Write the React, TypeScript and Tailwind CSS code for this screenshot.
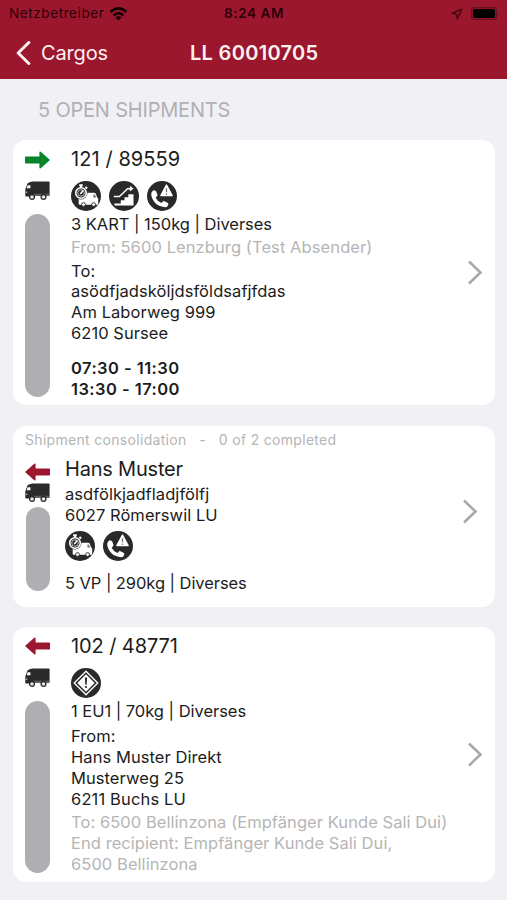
import type { ReactNode } from "react";

const ArrowIcon = ({ back = false }: { back?: boolean }) => (
  <svg
    width="25"
    height="18"
    viewBox="0 0 25 18"
    className={back ? "-scale-x-100 text-[#9b1730]" : "text-[#078629]"}
  >
    <path
      d="M.6 5.6h13.800V1.200q.2-1.300 1.300-.4L24.500 8.400q.5.600 0 1.200L15.700 17.200q-1.100.900-1.300-.4v-4.400H.6Q0 12.400 0 11.700V6.300q0-.7.6-.7z"
      fill="currentColor"
    />
  </svg>
);

const TruckIcon = () => (
  <svg width="25" height="19" viewBox="0 0 25 19">
    <path d="M8 .4h15.800q.8 0 .8.800v13.600H6.500V1.500z" fill="#2a2a2a" />
    <path d="M2.600 2.200Q5 .7 8 .4v15.200H1.100Q.3 15.600.3 14.800V8.600z" fill="#2a2a2a" />
    <path d="M2.700 4.200h2.700v3.100H1.700z" fill="#fff" />
    <path d="M9 13.300h15.500" stroke="#999" strokeWidth=".6" />
    <path d="M.8 11.200h1.600" stroke="#ddd" strokeWidth="1" />
    <circle cx="7" cy="15.900" r="2.400" fill="#e8e8e8" stroke="#2a2a2a" strokeWidth="1.300" />
    <circle cx="18.500" cy="15.900" r="2.400" fill="#e8e8e8" stroke="#2a2a2a" strokeWidth="1.300" />
  </svg>
);

const Badge = ({ children }: { children: ReactNode }) => (
  <svg width="30" height="30" viewBox="0 0 30 30">
    <circle cx="15" cy="15" r="15" fill="#292929" />
    {children}
  </svg>
);

const TimedDeliveryIcon = () => (
  <Badge>
    <path
      d="M13 11.800h10q1.300 0 1.900 1.300l1.300 3.400 1 1v5.300q0 .9-.9.900H8.700q-1 0-1-1v-6z"
      fill="#fff"
    />
    <path d="M22.400 13.400h.9q.6 0 .9.700l1 2.400h-2.800z" fill="#777" />
    <circle cx="12.500" cy="23.500" r="1.900" fill="#fff" stroke="#292929" strokeWidth=".9" />
    <circle cx="22.600" cy="23.500" r="1.900" fill="#fff" stroke="#292929" strokeWidth=".9" />
    <circle cx="10" cy="12" r="6.500" fill="#292929" />
    <circle cx="10" cy="12" r="5.300" fill="none" stroke="#fff" strokeWidth="1.600" />
    <circle cx="10" cy="12" r="3.300" fill="none" stroke="#c9c9c9" strokeWidth=".9" />
    <path d="M9.300 12.900l2.900-3.400" stroke="#fff" strokeWidth="1.600" />
    <path d="M8.200 4.300h3.600M10 4v2.800M14.400 5.900l1.700 1.500" stroke="#fff" strokeWidth="2" />
  </Badge>
);

const StairsIcon = () => (
  <Badge>
    <path d="M5.400 24.400v-1.900h6.400v-3.200H15.500v-3h3.800v-3.100h5.200v11.200z" fill="#fff" />
    <path d="M4.800 15.500h5.600l8.200-7.700H22" fill="none" stroke="#fff" strokeWidth="1.400" />
    <path d="M20.800 4.800l3.800 2.800-3.800 2.800z" fill="#fff" />
  </Badge>
);

const CallWarningIcon = () => (
  <Badge>
    <path
      d="M5.200 10.500q1-1.300 2.600-1.100 1 .2 1.400 1.100l1.200 3q.4 1.100-.6 1.900l-1.200 1q1.800 3.900 5.800 5.700l1.200-1.400q.8-.9 1.900-.4l3 1.400q1.100.6.8 1.800-.6 2.700-3.200 2.700Q10.600 25.800 7 20.600 3.900 16.100 4.300 12.500q.1-1.100.9-2z"
      fill="#fff"
    />
    <path
      d="M19.500 4l5.600 10.600H13.900z"
      fill="#fff"
      stroke="#fff"
      strokeWidth="1.400"
      strokeLinejoin="round"
    />
    <path d="M19.500 7.200v4.100M19.500 12.500v1.400" stroke="#777" strokeWidth="1.300" />
  </Badge>
);

const HazardIcon = () => (
  <Badge>
    <path d="M15 3.200L26.800 15 15 26.800 3.200 15z" fill="none" stroke="#fff" strokeWidth="1.300" />
    <path d="M15 6.300L23.700 15 15 23.700 6.300 15z" fill="#fff" />
    <path d="M13.900 9.500h2.200l-.4 7.200h-1.400z" fill="#292929" />
    <circle cx="15" cy="19" r="1.100" fill="#292929" />
  </Badge>
);

const Chevron = () => (
  <svg width="16" height="26" viewBox="0 0 16 26" fill="none" stroke="#a9a9ab" strokeWidth="2.600">
    <path d="M1 1.500L12.500 12.500 1 23.500" />
  </svg>
);

const StatusBar = () => (
  <div className="flex h-[27px] items-center text-[#2b0009]">
    <div className="flex w-[200px] items-center gap-[5px] pl-[9px]">
      <span className="text-[13.5px] tracking-[0.6px]">Netzbetreiber</span>
      <svg width="19" height="14" viewBox="0 0 18 14" fill="none" stroke="#170004" strokeWidth="2.600">
        <path d="M1 5Q9-2.200 17 5" />
        <path d="M4 8.400q5-4.400 10 0" />
        <path d="M6 10.500q3-2.500 6 0L9 13.600z" fill="#170004" stroke="none" />
      </svg>
    </div>
    <span className="w-[108px] text-center text-[13.5px] font-semibold tracking-[0.6px]">
      8:24 AM
    </span>
    <div className="flex flex-1 items-center justify-end gap-[8px] pr-[7px]">
      <svg width="12" height="12" viewBox="0 0 12 12" fill="none" stroke="#4a0814" strokeWidth="1.500">
        <path d="M10.800 1.200L1.300 5.300l4.200 1.100.8 4.300z" strokeLinejoin="round" />
      </svg>
      <svg width="29" height="13" viewBox="0 0 29 13">
        <rect x=".6" y=".6" width="24.800" height="11.800" rx="3" fill="none" stroke="#680e20" strokeWidth="1.200" />
        <rect x="2" y="2" width="22" height="9" rx="1.800" fill="#000" />
        <path d="M27 4.500q2 2 0 4z" fill="#680e20" />
      </svg>
    </div>
  </div>
);

const NavBar = () => (
  <div className="flex h-[52px] items-center pb-px text-[#fdf1f0]">
    <div className="flex w-[190px] items-center gap-[10px] pl-[16px]">
      <svg width="15" height="24" viewBox="0 0 15 24" fill="none" stroke="currentColor" strokeWidth="3">
        <path d="M12.800 1.500L2.200 12l10.600 10.500" strokeLinecap="round" strokeLinejoin="round" />
      </svg>
      <span className="text-[20px] tracking-[-0.15px]">Cargos</span>
    </div>
    <h1 className="text-[20px] font-semibold tracking-[0.3px] whitespace-nowrap">LL 60010705</h1>
  </div>
);

const Card = ({ className, children }: { className: string; children: ReactNode }) => (
  <section className={`ml-[13px] mr-[12px] rounded-[13px] bg-white ${className}`}>
    {children}
  </section>
);

const App = () => {
  return (
    <div className="h-[900px] w-[507px] overflow-hidden bg-[#f1f0f5] font-['Inter',sans-serif] text-[#1c1c1c]">
      <header className="h-[79px] bg-[#9b172e]">
        <StatusBar />
        <NavBar />
      </header>

      <p className="h-[61px] pt-[19px] pl-[38px] text-[20px] leading-[25px] tracking-[-0.2px] text-[#b0b0b4]">
        5 OPEN SHIPMENTS
      </p>

      <main className="text-[16.5px] leading-[20.8px] tracking-[0.06px] whitespace-nowrap">
        <Card className="flex h-[265px]">
          <div className="flex w-[58px] flex-col pt-[11px] pl-[12px]">
            <ArrowIcon />
            <div className="mt-[12px] h-[19px]">
              <TruckIcon />
            </div>
            <div className="mt-[14px] h-[183px] w-[25px] rounded-full bg-[#afaeb2]" />
          </div>
          <div className="flex-1 pt-[7px]">
            <h2 className="text-[20px] leading-[24px] tracking-[0.08px]">121 / 89559</h2>
            <div className="mt-[10px] mb-[3px] flex gap-[8px]">
              <TimedDeliveryIcon />
              <StairsIcon />
              <CallWarningIcon />
            </div>
            <p className="tracking-[-0.03px]">3 KART | 150kg | Diverses</p>
            <p className="mt-[2px] tracking-[0.09px] text-[#b5b5b5]">From: 5600 Lenzburg (Test Absender)</p>
            <p className="mt-[3px]">To:</p>
            <p>asödfjadsköljdsföldsafjfdas</p>
            <p>Am Laborweg 999</p>
            <p>6210 Sursee</p>
            <p className="mt-[14px] font-semibold tracking-[0.45px]">07:30 - 11:30</p>
            <p className="font-semibold tracking-[0.45px]">13:30 - 17:00</p>
          </div>
          <div className="flex items-center pr-[11px]">
            <Chevron />
          </div>
        </Card>

        <Card className="mt-[21px] h-[181px]">
          <p className="h-[30px] pt-[4px] pl-[12px] text-[14px] tracking-[0.31px] whitespace-pre text-[#b5b5b5]">
            {"Shipment consolidation   -   0 of 2 completed"}
          </p>
          <div className="flex h-[151px]">
            <div className="flex w-[52px] flex-col pt-[7px] pl-[12px]">
              <ArrowIcon back />
              <div className="mt-[2px] h-[19px]">
                <TruckIcon />
              </div>
              <div className="mt-[5px] ml-[1px] h-[84px] w-[24px] rounded-full bg-[#afaeb2]" />
            </div>
            <div className="flex-1 pt-[1px]">
              <h2 className="text-[20px] leading-[24px] tracking-[-0.2px]">Hans Muster</h2>
              <p className="mt-[3px]">asdfölkjadfladjfölfj</p>
              <p>6027 Römerswil LU</p>
              <div className="mt-[5px] mb-[12px] flex gap-[8px]">
                <TimedDeliveryIcon />
                <CallWarningIcon />
              </div>
              <p className="tracking-[-0.07px]">5 VP | 290kg | Diverses</p>
            </div>
            <div className="flex h-[112px] items-center pr-[16px]">
              <Chevron />
            </div>
          </div>
        </Card>

        <Card className="mt-[20px] flex h-[255px]">
          <div className="flex w-[58px] flex-col pt-[10px] pl-[12px]">
            <ArrowIcon back />
            <div className="mt-[13px] h-[19px]">
              <TruckIcon />
            </div>
            <div className="mt-[14px] h-[172px] w-[25px] rounded-full bg-[#afaeb2]" />
          </div>
          <div className="flex-1 pt-[7px]">
            <h2 className="text-[20px] leading-[24px] tracking-[-0.1px]">102 / 48771</h2>
            <div className="mt-[10px] mb-[3px] h-[30px]">
              <HazardIcon />
            </div>
            <p className="tracking-[-0.03px]">1 EU1 | 70kg | Diverses</p>
            <p className="mt-[4.7px]">From:</p>
            <p>Hans Muster Direkt</p>
            <p>Musterweg 25</p>
            <p className="tracking-[0.15px]">6211 Buchs LU</p>
            <div className="mt-[2.6px] text-[#b5b5b5]">
              <p>To: 6500 Bellinzona (Empfänger Kunde Sali Dui)</p>
              <p>End recipient: Empfänger Kunde Sali Dui,</p>
              <p>6500 Bellinzona</p>
            </div>
          </div>
          <div className="flex items-center pr-[11px]">
            <Chevron />
          </div>
        </Card>
      </main>
    </div>
  );
};

export default App;
